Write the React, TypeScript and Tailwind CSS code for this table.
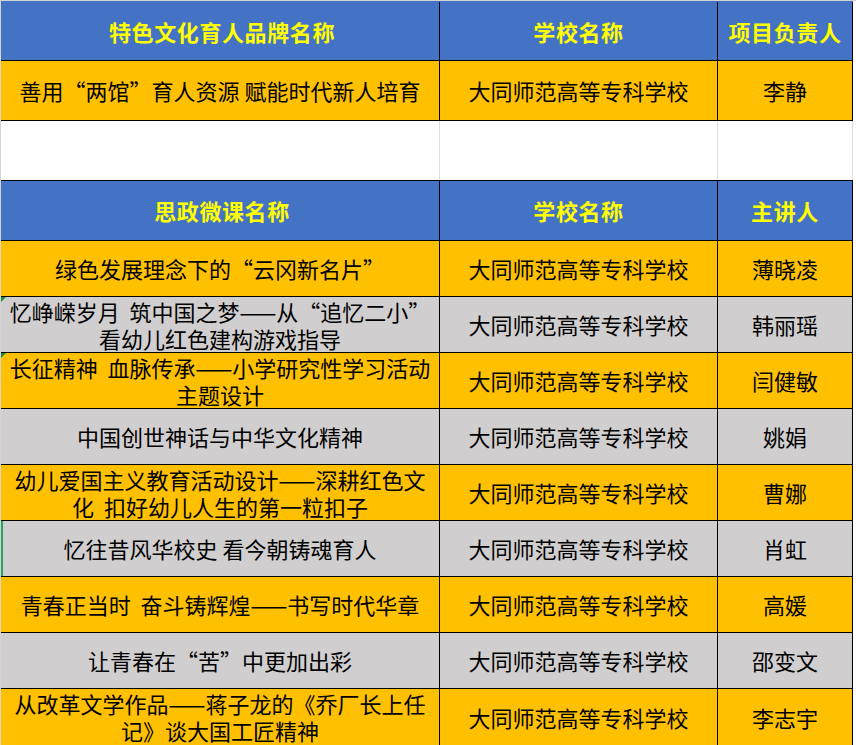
const font = { fontFamily: '"Noto Sans CJK SC", "Noto Sans", sans-serif' };

type Row = { title: string; school: string; person: string; bg: "y" | "g"; mark?: boolean; sel?: boolean };

const rows: Row[] = [
  { title: "绿色发展理念下的“云冈新名片”", school: "大同师范高等专科学校", person: "薄晓凌", bg: "y" },
  { title: "忆峥嵘岁月  筑中国之梦——从“追忆二小”\n看幼儿红色建构游戏指导", school: "大同师范高等专科学校", person: "韩丽瑶", bg: "g", mark: true },
  { title: "长征精神  血脉传承——小学研究性学习活动\n主题设计", school: "大同师范高等专科学校", person: "闫健敏", bg: "y", mark: true },
  { title: "中国创世神话与中华文化精神", school: "大同师范高等专科学校", person: "姚娟", bg: "g" },
  { title: "幼儿爱国主义教育活动设计——深耕红色文\n化  扣好幼儿人生的第一粒扣子", school: "大同师范高等专科学校", person: "曹娜", bg: "y" },
  { title: "忆往昔风华校史 看今朝铸魂育人", school: "大同师范高等专科学校", person: "肖虹", bg: "g", sel: true },
  { title: "青春正当时  奋斗铸辉煌——书写时代华章", school: "大同师范高等专科学校", person: "高媛", bg: "y" },
  { title: "让青春在“苦”中更加出彩", school: "大同师范高等专科学校", person: "邵变文", bg: "g" },
  { title: "从改革文学作品——蒋子龙的《乔厂长上任\n记》谈大国工匠精神", school: "大同师范高等专科学校", person: "李志宇", bg: "y" },
];

function HeaderRow({ a, b, c, top }: { a: string; b: string; c: string; top?: boolean }) {
  const cell = "flex items-center justify-center border-r border-black text-[22px] font-bold tracking-[0.6px] text-[#ffff00]";
  return (
    <div className={`flex bg-[#4472c4] border-b border-black ${top ? "h-[60px] border-t border-t-[#4472c4]" : "h-[61px] border-t"}`}>
      <div className={`${cell} w-[439px] pl-[4px]`}>{a}</div>
      <div className={`${cell} w-[278px]`}>{b}</div>
      <div className={`${cell} w-[135px]`}>{c}</div>
    </div>
  );
}

function DataRow({ r, h }: { r: Row; h: string }) {
  const bg = r.bg === "y" ? "bg-[#ffc000]" : "bg-[#d0cece]";
  const cell = "flex items-center justify-center border-r border-black text-[22px] text-black";
  return (
    <div className={`flex ${bg} border-b border-black ${h}`}>
      <div className={`${cell} relative w-[439px]`}>
        {r.mark && (
          <span className="absolute left-0 top-0 h-0 w-0 border-t-[5px] border-r-[5px] border-t-[#1e8a3a] border-r-transparent" />
        )}
        {r.sel && <span className="absolute left-0 top-0 bottom-0 w-[2px] bg-[#21a366]" />}
        <span className="whitespace-pre text-center leading-[27px]">{r.title}</span>
      </div>
      <div className={`${cell} w-[278px]`}>{r.school}</div>
      <div className={`${cell} w-[135px]`}>{r.person}</div>
    </div>
  );
}

export default function App() {
  return (
    <div className="w-[856px] h-[745px] overflow-hidden bg-white border-l border-t border-[#d4d4d4]" style={font}>
      <div className="w-[852px]">
        <HeaderRow a="特色文化育人品牌名称" b="学校名称" c="项目负责人" top />
        <div className="flex bg-[#ffc000] border-b border-black h-[60px]">
          <div className="flex w-[439px] items-center justify-center border-r border-black text-[22px] text-black">
            善用“两馆”育人资源 赋能时代新人培育
          </div>
          <div className="flex w-[278px] items-center justify-center border-r border-black text-[22px] text-black">
            大同师范高等专科学校
          </div>
          <div className="flex w-[135px] items-center justify-center border-r border-black text-[22px] text-black">
            李静
          </div>
        </div>
        <div className="flex h-[59px] bg-white">
          <div className="w-[439px] border-r border-[#dedede]" />
          <div className="w-[278px] border-r border-[#dedede]" />
          <div className="w-[135px] border-r border-[#dedede]" />
        </div>
        <HeaderRow a="思政微课名称" b="学校名称" c="主讲人" />
        {rows.map((r, i) => (
          <DataRow key={r.person} r={r} h={i === rows.length - 1 ? "h-[57px]" : "h-[56px]"} />
        ))}
      </div>
    </div>
  );
}
